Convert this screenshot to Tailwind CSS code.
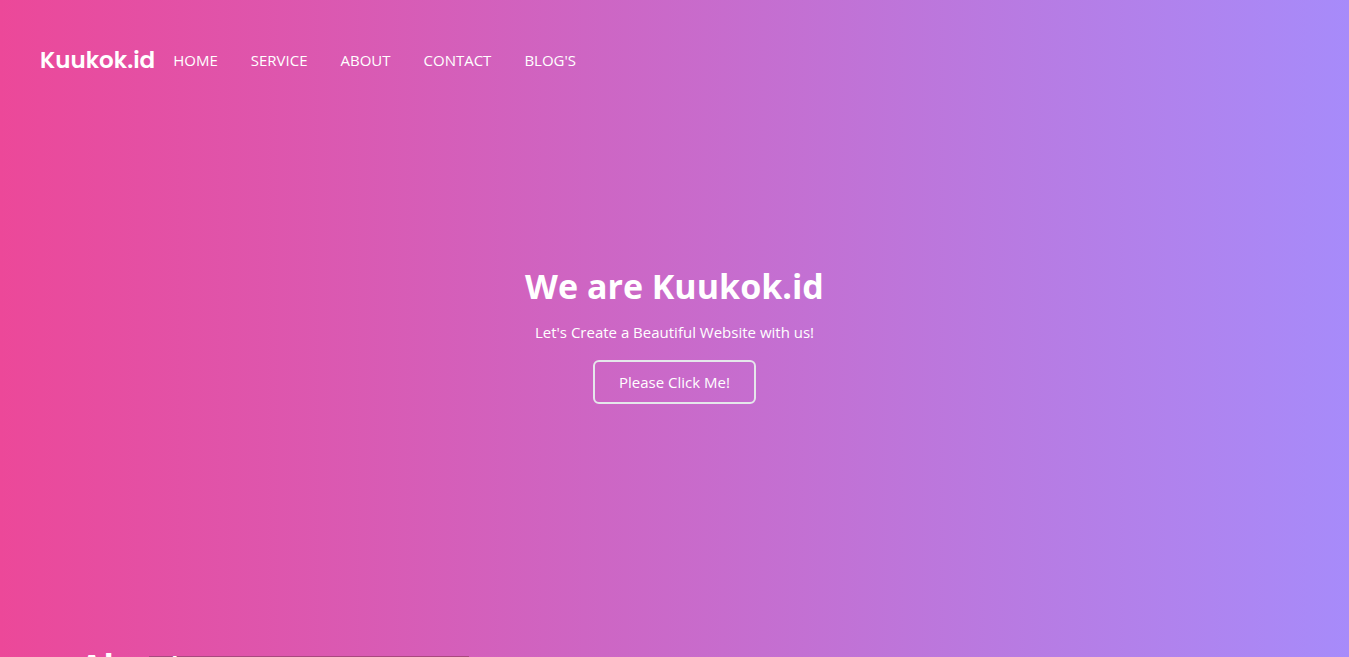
<!DOCTYPE html>
<html lang="en">
<head>
<meta charset="utf-8">
<meta name="viewport" content="width=device-width, initial-scale=1">
<title>Kuukok.id</title>
<script src="https://cdn.jsdelivr.net/npm/@tailwindcss/browser@4"></script>
</head>
<body class="h-screen overflow-hidden bg-linear-to-r/srgb from-[#ec4899] to-[#a78bfa] font-['Open_Sans',sans-serif] text-white">
<header class="flex h-[120px] items-center gap-[18px] px-10">
  <a href="#" class="font-['Poppins','Inter',sans-serif] text-[23px] leading-8 font-semibold">Kuukok.id</a>
  <nav aria-label="Main">
    <ul class="flex gap-[33px] text-[15px] leading-6">
      <li><a href="#home">HOME</a></li>
      <li><a href="#service">SERVICE</a></li>
      <li><a href="#about">ABOUT</a></li>
      <li><a href="#contact">CONTACT</a></li>
      <li><a href="#blogs">BLOG'S</a></li>
    </ul>
  </nav>
</header>
<main>
  <section id="home" class="flex h-[526px] flex-col items-center pt-[146px] text-center">
    <h1 class="text-[34px] leading-10 font-bold">We are Kuukok.id</h1>
    <p class="mt-[14px] text-[15px] leading-6">Let's Create a Beautiful Website with us!</p>
    <button type="button" class="mt-4 h-11 rounded-md border-2 border-gray-200 px-6 text-[15px] leading-6">Please Click Me!</button>
  </section>
  <section id="about" class="px-20">
    <h2 class="text-[34px] leading-10 font-bold">About</h2>
    <div class="relative -z-10 -mt-[30px] ml-[69px] h-60 w-80 bg-[#a8487f]"></div>
  </section>
</main>
</body>
</html>
